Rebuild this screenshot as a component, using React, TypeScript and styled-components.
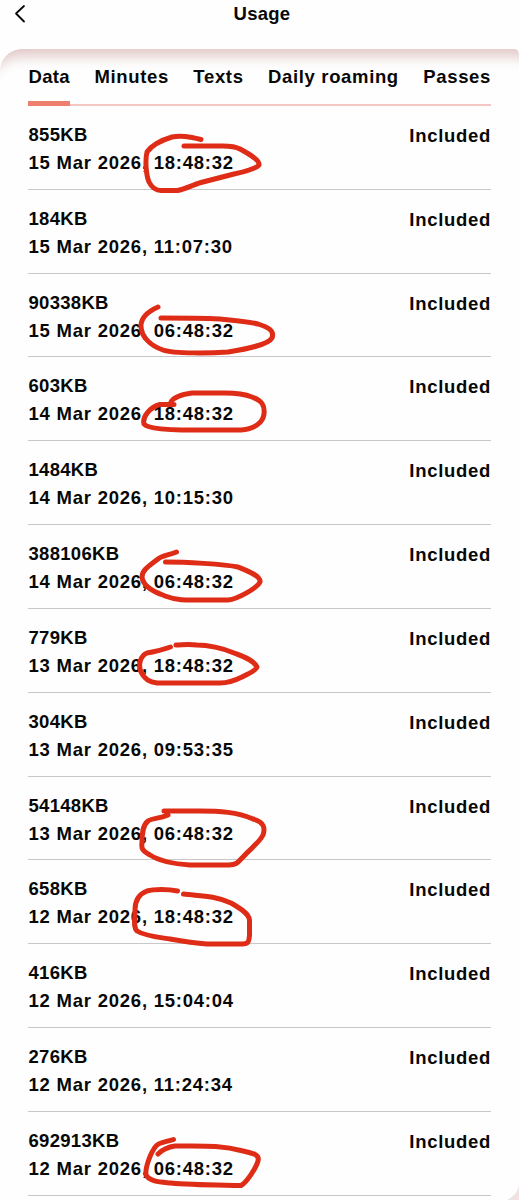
import React from "react";
import styled, { createGlobalStyle } from "styled-components";

const Global = createGlobalStyle`
  * { box-sizing: border-box; }
  html, body { margin: 0; background: #fff; }
  body { font-family: "Liberation Sans", Arial, sans-serif; overflow: hidden; }
`;

const Screen = styled.div`
  position: relative;
  width: 519px;
  height: 1200px;
  overflow: hidden;
  background: #fefefe;
  color: #080808;
  font-size: 18.5px;
  font-weight: 700;
  letter-spacing: 0.7px;
`;

const Header = styled.header`
  display: grid;
  grid-template-columns: 1fr auto 1fr;
  height: 49px;
  padding: 0 9px 0 14px;
`;

const BackIcon = styled.svg`
  width: 14px;
  height: 28px;
`;

const Title = styled.h1`
  margin: 4px 0 0;
  font-size: 18.5px;
  line-height: 20px;
  letter-spacing: 0.25px;
`;

const Card = styled.main`
  height: 1151px;
  padding: 16px 28px 0;
  border-radius: 22px 5px 0 0;
  background: #fefefe;
  box-shadow: inset 0 24px 14px -17px #dfc6c5;
`;

const Tabs = styled.nav`
  display: flex;
  justify-content: space-between;
  height: 41px;
  width: 463px;
  border-bottom: 2px solid #f3c6c3;
`;

const Tab = styled.div<{ $active?: boolean }>`
  height: 41px;
  padding: 1px 0 0 0.5px;
  line-height: 22px;
  white-space: nowrap;
  letter-spacing: ${(p) => (p.$active ? "0.35px" : "0.65px")};
  border-bottom: ${(p) => (p.$active ? "5px solid #ee7e6d" : "0")};
`;

const Row = styled.div`
  display: flex;
  justify-content: space-between;
  height: 83.83px;
  width: 463px;
  padding-top: 15px;
  border-bottom: 1px solid #c8c8c8;
`;

const Details = styled.div`
  padding-left: 0.5px;
`;

const Amount = styled.div`
  line-height: 28px;
  letter-spacing: 0.3px;
`;

const When = styled.div`
  line-height: 28px;
  letter-spacing: 0.77px;
`;

const Status = styled.div`
  line-height: 30px;
`;

const Marker = styled.svg`
  position: absolute;
  inset: 0;
  pointer-events: none;
`;

const tabs = ["Data", "Minutes", "Texts", "Daily roaming", "Passes"];

const usage: [string, string][] = [
  ["855KB", "15 Mar 2026, 18:48:32"],
  ["184KB", "15 Mar 2026, 11:07:30"],
  ["90338KB", "15 Mar 2026, 06:48:32"],
  ["603KB", "14 Mar 2026, 18:48:32"],
  ["1484KB", "14 Mar 2026, 10:15:30"],
  ["388106KB", "14 Mar 2026, 06:48:32"],
  ["779KB", "13 Mar 2026, 18:48:32"],
  ["304KB", "13 Mar 2026, 09:53:35"],
  ["54148KB", "13 Mar 2026, 06:48:32"],
  ["658KB", "12 Mar 2026, 18:48:32"],
  ["416KB", "12 Mar 2026, 15:04:04"],
  ["276KB", "12 Mar 2026, 11:24:34"],
  ["692913KB", "12 Mar 2026, 06:48:32"],
];

const strokes = [
  "M201 139.5C190 137 181 135 172 137C162 140 152 145 147 152C145 160 146 175 149 182C152 188 156 190.5 161 190.5H177C184 190 192 185 201 182.5L234 174C243 172 256 169 259 165C260 160 249 154 240 149C233 145 225 146 216 146H184",
  "M158 307C149 311 141 317 141 326C141 337 151 346 163 350C174 354 213 353 228 352C246 349 268 345 272 338C275 330 267 327 258 324C246 321 231 320 220 319C198 318 181 318 161 318",
  "M174 404.5H160C150 407 142 417 144 424C148 429 172 430 182 430H241C254 429 263 423 264 414C265 405 262 401 252 397C242 393 233 393 225 393H192C184 394 174 397 171 402",
  "M176.5 552C170 555 163 555 158 559C149 566 142 570 142 577C143 588 158 593 165 596C178 601 190 600 202 600H228C238 599 257 588 260 582C261 576 248 571 238 567C224 564 184 562 165.5 562",
  "M170.5 647C162 650 154 652 147 653C140 656 138 665 141 672C145 680 150 682 157 683H220C229 683 236 680 242 677C247 674 256 671 257 667C254 660 242 656 234 653C223 648 207 645 197 645C187 644 182 645 176 645",
  "M164 811H199C220 811 237 812 253 819C265 822 265 829 263 835C259 843 250 849 243 857C238 862 237 865 229 865H190C174 864 158 860 150 855C143 851 141 849 142 843C142 832 143 825 148 821C152 818 159 819 168 815",
  "M177.5 891C168 889 154 889 147 891C139 894 135 901 135 910C135 920 133 927 137 931C145 936 157 937 170 939C181 941 192 943 207 944H242C249 944 249 941 249.5 935V920C249 913 238 907 231 903C214 895 198 896 183.5 894",
  "M173.5 1139.5C166 1142 159 1142 156 1146C151 1152 145 1167 146 1175C150 1182 161 1182 171 1183C190 1185 217 1185 241 1185.5C247 1182 256 1168 258 1161C260 1154 251 1153 243 1151C221 1145 204 1146 175 1146C167 1147 162 1150 158 1154",
];

export default function App() {
  return (
    <>
      <Global />
      <Screen>
        <Header>
          <BackIcon viewBox="0 0 14 28">
            <path
              d="M10 6L2 13.5L10 21.5"
              fill="none"
              stroke="#080808"
              strokeWidth="1.8"
              strokeLinecap="round"
              strokeLinejoin="round"
            />
          </BackIcon>
          <Title>Usage</Title>
        </Header>
        <Card>
          <Tabs>
            {tabs.map((name, i) => (
              <Tab key={name} $active={i === 0}>
                {name}
              </Tab>
            ))}
          </Tabs>
          {usage.map(([amount, when]) => (
            <Row key={when}>
              <Details>
                <Amount>{amount}</Amount>
                <When>{when}</When>
              </Details>
              <Status>Included</Status>
            </Row>
          ))}
        </Card>
        <Marker width="519" height="1200" viewBox="0 0 519 1200">
          <path d="M519 1186C518 1192 513 1197 507 1200H519Z" fill="#efe2e0" />
          <g
            fill="none"
            stroke="#de2c17"
            strokeWidth="5"
            strokeLinecap="round"
            strokeLinejoin="round"
          >
            {strokes.map((d) => (
              <path key={d} d={d} />
            ))}
          </g>
        </Marker>
      </Screen>
    </>
  );
}
